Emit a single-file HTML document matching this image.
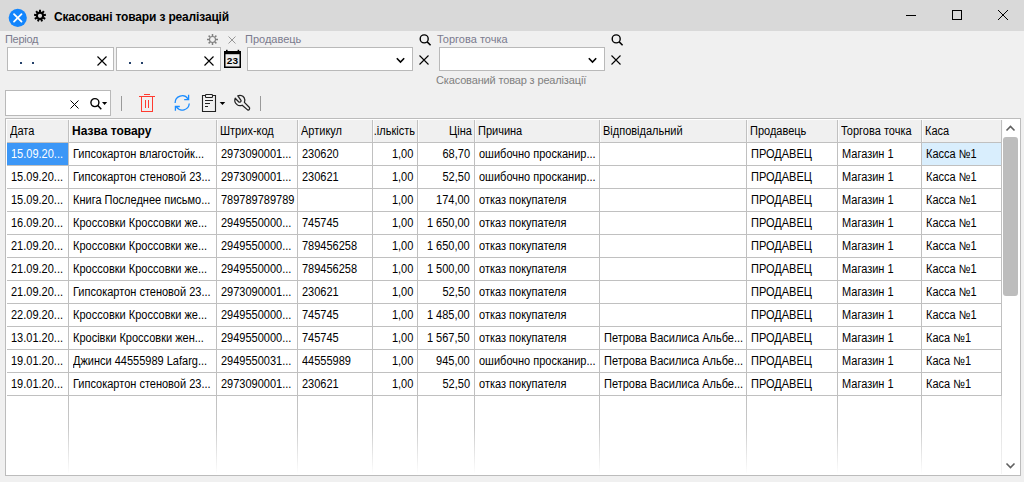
<!DOCTYPE html>
<html><head><meta charset="utf-8"><title>Скасовані товари з реалізації</title>
<style>
*{margin:0;padding:0;box-sizing:border-box}
html,body{width:1024px;height:482px;overflow:hidden;background:#f0f0f0;font-family:"Liberation Sans",sans-serif;font-size:11px;color:#000}
.a{position:absolute}
svg{display:block}
#title{left:0;top:0;width:1024px;height:31px;background:#d9d9d9}
.ttl{left:54px;top:9px;font-weight:bold;font-size:12px;line-height:16px;color:#000;white-space:nowrap;letter-spacing:-0.16px}
.lbl{color:#7b7b8e;font-size:11px;line-height:13px;white-space:nowrap}
.inp{background:#fff;border:1px solid #b9b9b9}
.grid{left:5px;top:118px;width:1016px;height:358px;border:1px solid #bcbcbc;background:#fff}
.hd{top:120px;height:22px;background:#f0f0f0}
.ht{top:120px;height:22px;line-height:22px;white-space:nowrap;overflow:hidden;font-size:12px}
.hl{background:#c0c0c0}
.ct{height:22px;line-height:22px;white-space:nowrap;overflow:hidden;font-size:12px}
.s{display:inline-block;transform:scaleX(0.9167);transform-origin:0 50%}
.r{display:flex;justify-content:flex-end}
.r .s{transform-origin:100% 50%;flex:none}
</style></head><body>

<div class="a" id="title"></div>
<svg class="a" style="left:0px;top:0px" width="32" height="31" viewBox="0 0 32 31"><circle cx="17.75" cy="17.85" r="9.1" fill="#1285fd"/><path d="M14 14.1 L21.5 21.6 M21.5 14.1 L14 21.6" stroke="#fff" stroke-width="1.8" stroke-linecap="round"/></svg>
<svg class="a" style="left:33px;top:9px" width="14" height="14" viewBox="0 0 14 14"><circle cx="7.0" cy="6.8" r="3.15" fill="none" stroke="#000" stroke-width="2.1"/><path d="M7.00 3.20 L7.00 0.80" stroke="#000" stroke-width="2.0"/><path d="M9.31 4.04 L10.86 2.20" stroke="#000" stroke-width="2.0"/><path d="M10.55 6.17 L12.91 5.76" stroke="#000" stroke-width="2.0"/><path d="M10.12 8.60 L12.20 9.80" stroke="#000" stroke-width="2.0"/><path d="M8.23 10.18 L9.05 12.44" stroke="#000" stroke-width="2.0"/><path d="M5.77 10.18 L4.95 12.44" stroke="#000" stroke-width="2.0"/><path d="M3.88 8.60 L1.80 9.80" stroke="#000" stroke-width="2.0"/><path d="M3.45 6.17 L1.09 5.76" stroke="#000" stroke-width="2.0"/><path d="M4.69 4.04 L3.14 2.20" stroke="#000" stroke-width="2.0"/></svg>
<div class="a ttl">Скасовані товари з реалізацій</div>
<svg class="a" style="left:890px;top:0px" width="134" height="31" viewBox="0 0 134 31"><path d="M16 15.5 H26" stroke="#000" stroke-width="1"/><rect x="62.5" y="10.5" width="9" height="9" fill="none" stroke="#000" stroke-width="1"/><path d="M108 10 L118 20 M118 10 L108 20" stroke="#000" stroke-width="1"/></svg>
<div class="a lbl" style="left:5px;top:33px;letter-spacing:-0.3px">Період</div>
<div class="a inp" style="left:7px;top:47px;width:107px;height:24px"></div>
<div class="a inp" style="left:116px;top:47px;width:105px;height:24px"></div>
<div class="a" style="left:20px;top:62px;width:2px;height:2px;background:#24406a"></div>
<div class="a" style="left:32px;top:62px;width:2px;height:2px;background:#24406a"></div>
<div class="a" style="left:129px;top:62px;width:2px;height:2px;background:#24406a"></div>
<div class="a" style="left:141px;top:62px;width:2px;height:2px;background:#24406a"></div>
<svg class="a" style="left:97px;top:56px" width="10" height="10" viewBox="0 0 10 10"><path d="M0.5 0.5 L9.5 9.5 M9.5 0.5 L0.5 9.5" stroke="#000" stroke-width="1.15"/></svg>
<svg class="a" style="left:204px;top:56px" width="10" height="10" viewBox="0 0 10 10"><path d="M0.5 0.5 L9.5 9.5 M9.5 0.5 L0.5 9.5" stroke="#000" stroke-width="1.15"/></svg>
<svg class="a" style="left:223px;top:49px" width="19" height="20" viewBox="0 0 19 20"><rect x="1.75" y="2.75" width="15.5" height="15.5" fill="#eeeeee" stroke="#000" stroke-width="1.5"/><rect x="1" y="2" width="17" height="3.2" fill="#000"/><rect x="3" y="0.8" width="1.6" height="2" fill="#000"/><rect x="14.6" y="0.8" width="1.6" height="2" fill="#000"/><text x="3.8" y="15.2" font-family="Liberation Sans" font-weight="bold" font-size="8.6" textLength="11.2" lengthAdjust="spacingAndGlyphs" fill="#000">23</text></svg>
<svg class="a" style="left:206px;top:33px" width="13" height="13" viewBox="0 0 13 13"><circle cx="6.5" cy="6.5" r="3.0" fill="none" stroke="#808080" stroke-width="1.1"/><path d="M10.00 6.50 L12.00 6.50" stroke="#808080" stroke-width="1.5"/><path d="M8.97 8.97 L10.39 10.39" stroke="#808080" stroke-width="1.5"/><path d="M6.50 10.00 L6.50 12.00" stroke="#808080" stroke-width="1.5"/><path d="M4.03 8.97 L2.61 10.39" stroke="#808080" stroke-width="1.5"/><path d="M3.00 6.50 L1.00 6.50" stroke="#808080" stroke-width="1.5"/><path d="M4.03 4.03 L2.61 2.61" stroke="#808080" stroke-width="1.5"/><path d="M6.50 3.00 L6.50 1.00" stroke="#808080" stroke-width="1.5"/><path d="M8.97 4.03 L10.39 2.61" stroke="#808080" stroke-width="1.5"/></svg>
<svg class="a" style="left:228px;top:36px" width="8" height="8" viewBox="0 0 8 8"><path d="M0.5 0.5 L7.5 7.5 M7.5 0.5 L0.5 7.5" stroke="#8c8c8c" stroke-width="0.9"/></svg>
<div class="a lbl" style="left:245px;top:33px">Продавець</div>
<div class="a inp" style="left:247px;top:47px;width:166px;height:24px"></div>
<svg class="a" style="left:396px;top:57px" width="10" height="7" viewBox="0 0 10 7"><path d="M0.8 1.3 L4.5 5 L8.2 1.3" fill="none" stroke="#000" stroke-width="1.6"/></svg>
<svg class="a" style="left:419px;top:34px" width="13" height="13" viewBox="0 0 13 13"><circle cx="5.2" cy="4.9" r="4.0" fill="none" stroke="#000" stroke-width="1.4"/><path d="M8.2 7.9 L11.6 11.3" stroke="#000" stroke-width="1.5"/></svg>
<svg class="a" style="left:419px;top:55px" width="10" height="10" viewBox="0 0 10 10"><path d="M0.5 0.5 L9.5 9.5 M9.5 0.5 L0.5 9.5" stroke="#000" stroke-width="1.1"/></svg>
<div class="a lbl" style="left:437px;top:33px">Торгова точка</div>
<div class="a inp" style="left:439px;top:47px;width:166px;height:24px"></div>
<svg class="a" style="left:588px;top:57px" width="10" height="7" viewBox="0 0 10 7"><path d="M0.8 1.3 L4.5 5 L8.2 1.3" fill="none" stroke="#000" stroke-width="1.6"/></svg>
<svg class="a" style="left:611px;top:34px" width="13" height="13" viewBox="0 0 13 13"><circle cx="5.2" cy="4.9" r="4.0" fill="none" stroke="#000" stroke-width="1.4"/><path d="M8.2 7.9 L11.6 11.3" stroke="#000" stroke-width="1.5"/></svg>
<svg class="a" style="left:611px;top:55px" width="10" height="10" viewBox="0 0 10 10"><path d="M0.5 0.5 L9.5 9.5 M9.5 0.5 L0.5 9.5" stroke="#000" stroke-width="1.1"/></svg>
<div class="a lbl" style="left:436px;top:74px;color:#808080;letter-spacing:-0.15px">Скасований товар з реалізації</div>
<div class="a inp" style="left:5px;top:90px;width:106px;height:26px"></div>
<svg class="a" style="left:70px;top:100px" width="9" height="9" viewBox="0 0 9 9"><path d="M0.5 0.5 L8.5 8.5 M8.5 0.5 L0.5 8.5" stroke="#000" stroke-width="1.0"/></svg>
<svg class="a" style="left:89px;top:97px" width="20" height="14" viewBox="0 0 20 14"><circle cx="5.9" cy="5.6" r="4.0" fill="none" stroke="#000" stroke-width="1.4"/><path d="M8.8 8.6 L12.3 12.2" stroke="#000" stroke-width="1.5"/><path d="M13 5 H18.2 L15.6 8 Z" fill="#000"/></svg>
<div class="a" style="left:121px;top:96px;width:1px;height:15px;background:#9a9a9a"></div>
<div class="a" style="left:260px;top:96px;width:1px;height:15px;background:#9a9a9a"></div>
<svg class="a" style="left:138px;top:93px" width="18" height="20" viewBox="0 0 18 20"><rect x="6" y="1" width="6" height="1" fill="#ff3b30"/><rect x="1" y="3" width="16" height="1" fill="#ff3b30"/><rect x="3" y="4" width="1" height="15" fill="#ff3b30"/><rect x="14" y="4" width="1" height="15" fill="#ff3b30"/><rect x="3" y="18" width="12" height="1" fill="#ff3b30"/><rect x="7" y="7" width="1" height="8" fill="#ff3b30"/><rect x="10" y="7" width="1" height="8" fill="#ff3b30"/></svg>
<svg class="a" style="left:172px;top:93px" width="20" height="19" viewBox="0 0 20 19"><path d="M3.10 9.90 A7.1 7.1 0 0 1 16.02 5.83" fill="none" stroke="#1a8cff" stroke-width="1.3"/><path d="M17.27 10.52 A7.1 7.1 0 0 1 4.38 13.97" fill="none" stroke="#1a8cff" stroke-width="1.3"/><path d="M16.6 1.8 V6.6 H12.2" fill="none" stroke="#1a8cff" stroke-width="1.3"/><path d="M3.4 17.8 V13.5 H7.8" fill="none" stroke="#1a8cff" stroke-width="1.3"/></svg>
<svg class="a" style="left:201px;top:93px" width="26" height="20" viewBox="0 0 26 20"><path d="M4.5 2.5 H1.5 V18.5 H14.5 V2.5 H11.5" fill="none" stroke="#222" stroke-width="1.1"/><rect x="4.5" y="1.5" width="7" height="3" rx="0.8" fill="#f0f0f0" stroke="#222" stroke-width="1.1"/><path d="M4 7.5 H12 M4 10.5 H9 M4 13.5 H7" stroke="#222" stroke-width="1"/><path d="M18.7 9 H24.2 L21.45 12 Z" fill="#000"/></svg>
<svg class="a" style="left:231px;top:92px" width="22" height="22" viewBox="0 0 22 22"><path d="M6.8 3.8 C8.8 3.0 11.8 3.4 13.1 5.6 C14.0 7.2 13.9 9.4 13.4 10.4 L18.2 15.2 C19.3 16.3 18.2 18.6 16.6 17.9 L11.2 13.2 C9.8 13.8 7.4 13.8 6.0 12.6 C4.0 11.0 3.4 8.4 4.2 6.2 L7.6 9.8 C8.6 10.8 10.6 9.6 10.0 8.3 Z" fill="none" stroke="#222" stroke-width="1.25" stroke-linejoin="round"/></svg>
<div class="a grid"></div>
<div class="a" style="left:6px;top:119px;width:1014px;height:1px;background:#fff"></div>
<div class="a hd" style="left:7px;width:994px"></div>
<div class="a hl" style="left:7px;top:142px;width:994px;height:1px"></div>
<div class="a hl" style="left:68px;top:120px;width:1px;height:22px"></div>
<div class="a" style="left:69px;top:120px;width:1px;height:22px;background:#fafafa"></div>
<div class="a ht" style="left:7px;width:61px;padding-left:3px;"><span class="s">Дата</span></div>
<div class="a hl" style="left:216px;top:120px;width:1px;height:22px"></div>
<div class="a" style="left:217px;top:120px;width:1px;height:22px;background:#fafafa"></div>
<div class="a ht" style="left:69px;width:147px;padding-left:3px;font-weight:bold;font-size:12px;">Назва товару</div>
<div class="a hl" style="left:297px;top:120px;width:1px;height:22px"></div>
<div class="a" style="left:298px;top:120px;width:1px;height:22px;background:#fafafa"></div>
<div class="a ht" style="left:217px;width:80px;padding-left:3px;"><span class="s">Штрих-код</span></div>
<div class="a hl" style="left:372px;top:120px;width:1px;height:22px"></div>
<div class="a" style="left:373px;top:120px;width:1px;height:22px;background:#fafafa"></div>
<div class="a ht" style="left:298px;width:74px;padding-left:3px;"><span class="s">Артикул</span></div>
<div class="a hl" style="left:417px;top:120px;width:1px;height:22px"></div>
<div class="a" style="left:418px;top:120px;width:1px;height:22px;background:#fafafa"></div>
<div class="a ht r" style="left:373px;width:44px;text-align:right;padding-right:2px;"><span class="s">.ількість</span></div>
<div class="a hl" style="left:474px;top:120px;width:1px;height:22px"></div>
<div class="a" style="left:475px;top:120px;width:1px;height:22px;background:#fafafa"></div>
<div class="a ht r" style="left:418px;width:56px;text-align:right;padding-right:2px;"><span class="s">Ціна</span></div>
<div class="a hl" style="left:599px;top:120px;width:1px;height:22px"></div>
<div class="a" style="left:600px;top:120px;width:1px;height:22px;background:#fafafa"></div>
<div class="a ht" style="left:475px;width:124px;padding-left:3px;"><span class="s">Причина</span></div>
<div class="a hl" style="left:746px;top:120px;width:1px;height:22px"></div>
<div class="a" style="left:747px;top:120px;width:1px;height:22px;background:#fafafa"></div>
<div class="a ht" style="left:600px;width:146px;padding-left:3px;"><span class="s">Відповідальний</span></div>
<div class="a hl" style="left:837px;top:120px;width:1px;height:22px"></div>
<div class="a" style="left:838px;top:120px;width:1px;height:22px;background:#fafafa"></div>
<div class="a ht" style="left:747px;width:90px;padding-left:3px;"><span class="s">Продавець</span></div>
<div class="a hl" style="left:921px;top:120px;width:1px;height:22px"></div>
<div class="a" style="left:922px;top:120px;width:1px;height:22px;background:#fafafa"></div>
<div class="a ht" style="left:838px;width:83px;padding-left:3px;"><span class="s">Торгова точка</span></div>
<div class="a hl" style="left:1001px;top:120px;width:1px;height:22px"></div>
<div class="a" style="left:1002px;top:120px;width:1px;height:22px;background:#fafafa"></div>
<div class="a ht" style="left:922px;width:79px;padding-left:3px;"><span class="s">Каса</span></div>
<div class="a hl" style="left:7px;top:165px;width:994px;height:1px"></div>
<div class="a" style="left:7px;top:143px;width:61px;height:22px;background:#3c97f7;"></div>
<div class="a ct" style="left:7px;top:143px;width:61px;color:#fff;padding-left:4px;"><span class="s">15.09.20...</span></div>
<div class="a ct" style="left:69px;top:143px;width:147px;padding-left:4px;"><span class="s">Гипсокартон влагостойк...</span></div>
<div class="a ct" style="left:217px;top:143px;width:80px;padding-left:4px;"><span class="s">2973090001...</span></div>
<div class="a ct" style="left:298px;top:143px;width:74px;padding-left:4px;"><span class="s">230620</span></div>
<div class="a ct r" style="left:373px;top:143px;width:44px;text-align:right;padding-right:4px;"><span class="s">1,00</span></div>
<div class="a ct r" style="left:418px;top:143px;width:56px;text-align:right;padding-right:4px;"><span class="s">68,70</span></div>
<div class="a ct" style="left:475px;top:143px;width:124px;padding-left:4px;"><span class="s">ошибочно просканир...</span></div>
<div class="a ct" style="left:600px;top:143px;width:146px;padding-left:4px;"><span class="s"></span></div>
<div class="a ct" style="left:747px;top:143px;width:90px;padding-left:4px;"><span class="s">ПРОДАВЕЦ</span></div>
<div class="a ct" style="left:838px;top:143px;width:83px;padding-left:4px;"><span class="s">Магазин 1</span></div>
<div class="a" style="left:922px;top:143px;width:79px;height:22px;background:#d9eefd;"></div>
<div class="a ct" style="left:922px;top:143px;width:79px;padding-left:4px;"><span class="s">Касса №1</span></div>
<div class="a hl" style="left:7px;top:188px;width:994px;height:1px"></div>
<div class="a ct" style="left:7px;top:166px;width:61px;padding-left:4px;"><span class="s">15.09.20...</span></div>
<div class="a ct" style="left:69px;top:166px;width:147px;padding-left:4px;"><span class="s">Гипсокартон стеновой 23...</span></div>
<div class="a ct" style="left:217px;top:166px;width:80px;padding-left:4px;"><span class="s">2973090001...</span></div>
<div class="a ct" style="left:298px;top:166px;width:74px;padding-left:4px;"><span class="s">230621</span></div>
<div class="a ct r" style="left:373px;top:166px;width:44px;text-align:right;padding-right:4px;"><span class="s">1,00</span></div>
<div class="a ct r" style="left:418px;top:166px;width:56px;text-align:right;padding-right:4px;"><span class="s">52,50</span></div>
<div class="a ct" style="left:475px;top:166px;width:124px;padding-left:4px;"><span class="s">ошибочно просканир...</span></div>
<div class="a ct" style="left:600px;top:166px;width:146px;padding-left:4px;"><span class="s"></span></div>
<div class="a ct" style="left:747px;top:166px;width:90px;padding-left:4px;"><span class="s">ПРОДАВЕЦ</span></div>
<div class="a ct" style="left:838px;top:166px;width:83px;padding-left:4px;"><span class="s">Магазин 1</span></div>
<div class="a ct" style="left:922px;top:166px;width:79px;padding-left:4px;"><span class="s">Касса №1</span></div>
<div class="a hl" style="left:7px;top:211px;width:994px;height:1px"></div>
<div class="a ct" style="left:7px;top:189px;width:61px;padding-left:4px;"><span class="s">15.09.20...</span></div>
<div class="a ct" style="left:69px;top:189px;width:147px;padding-left:4px;"><span class="s">Книга Последнее письмо...</span></div>
<div class="a ct" style="left:217px;top:189px;width:80px;padding-left:4px;"><span class="s">789789789789</span></div>
<div class="a ct" style="left:298px;top:189px;width:74px;padding-left:4px;"><span class="s"></span></div>
<div class="a ct r" style="left:373px;top:189px;width:44px;text-align:right;padding-right:4px;"><span class="s">1,00</span></div>
<div class="a ct r" style="left:418px;top:189px;width:56px;text-align:right;padding-right:4px;"><span class="s">174,00</span></div>
<div class="a ct" style="left:475px;top:189px;width:124px;padding-left:4px;"><span class="s">отказ покупателя</span></div>
<div class="a ct" style="left:600px;top:189px;width:146px;padding-left:4px;"><span class="s"></span></div>
<div class="a ct" style="left:747px;top:189px;width:90px;padding-left:4px;"><span class="s">ПРОДАВЕЦ</span></div>
<div class="a ct" style="left:838px;top:189px;width:83px;padding-left:4px;"><span class="s">Магазин 1</span></div>
<div class="a ct" style="left:922px;top:189px;width:79px;padding-left:4px;"><span class="s">Касса №1</span></div>
<div class="a hl" style="left:7px;top:234px;width:994px;height:1px"></div>
<div class="a ct" style="left:7px;top:212px;width:61px;padding-left:4px;"><span class="s">16.09.20...</span></div>
<div class="a ct" style="left:69px;top:212px;width:147px;padding-left:4px;"><span class="s">Кроссовки Кроссовки же...</span></div>
<div class="a ct" style="left:217px;top:212px;width:80px;padding-left:4px;"><span class="s">2949550000...</span></div>
<div class="a ct" style="left:298px;top:212px;width:74px;padding-left:4px;"><span class="s">745745</span></div>
<div class="a ct r" style="left:373px;top:212px;width:44px;text-align:right;padding-right:4px;"><span class="s">1,00</span></div>
<div class="a ct r" style="left:418px;top:212px;width:56px;text-align:right;padding-right:4px;"><span class="s">1 650,00</span></div>
<div class="a ct" style="left:475px;top:212px;width:124px;padding-left:4px;"><span class="s">отказ покупателя</span></div>
<div class="a ct" style="left:600px;top:212px;width:146px;padding-left:4px;"><span class="s"></span></div>
<div class="a ct" style="left:747px;top:212px;width:90px;padding-left:4px;"><span class="s">ПРОДАВЕЦ</span></div>
<div class="a ct" style="left:838px;top:212px;width:83px;padding-left:4px;"><span class="s">Магазин 1</span></div>
<div class="a ct" style="left:922px;top:212px;width:79px;padding-left:4px;"><span class="s">Касса №1</span></div>
<div class="a hl" style="left:7px;top:257px;width:994px;height:1px"></div>
<div class="a ct" style="left:7px;top:235px;width:61px;padding-left:4px;"><span class="s">21.09.20...</span></div>
<div class="a ct" style="left:69px;top:235px;width:147px;padding-left:4px;"><span class="s">Кроссовки Кроссовки же...</span></div>
<div class="a ct" style="left:217px;top:235px;width:80px;padding-left:4px;"><span class="s">2949550000...</span></div>
<div class="a ct" style="left:298px;top:235px;width:74px;padding-left:4px;"><span class="s">789456258</span></div>
<div class="a ct r" style="left:373px;top:235px;width:44px;text-align:right;padding-right:4px;"><span class="s">1,00</span></div>
<div class="a ct r" style="left:418px;top:235px;width:56px;text-align:right;padding-right:4px;"><span class="s">1 650,00</span></div>
<div class="a ct" style="left:475px;top:235px;width:124px;padding-left:4px;"><span class="s">отказ покупателя</span></div>
<div class="a ct" style="left:600px;top:235px;width:146px;padding-left:4px;"><span class="s"></span></div>
<div class="a ct" style="left:747px;top:235px;width:90px;padding-left:4px;"><span class="s">ПРОДАВЕЦ</span></div>
<div class="a ct" style="left:838px;top:235px;width:83px;padding-left:4px;"><span class="s">Магазин 1</span></div>
<div class="a ct" style="left:922px;top:235px;width:79px;padding-left:4px;"><span class="s">Касса №1</span></div>
<div class="a hl" style="left:7px;top:280px;width:994px;height:1px"></div>
<div class="a ct" style="left:7px;top:258px;width:61px;padding-left:4px;"><span class="s">21.09.20...</span></div>
<div class="a ct" style="left:69px;top:258px;width:147px;padding-left:4px;"><span class="s">Кроссовки Кроссовки же...</span></div>
<div class="a ct" style="left:217px;top:258px;width:80px;padding-left:4px;"><span class="s">2949550000...</span></div>
<div class="a ct" style="left:298px;top:258px;width:74px;padding-left:4px;"><span class="s">789456258</span></div>
<div class="a ct r" style="left:373px;top:258px;width:44px;text-align:right;padding-right:4px;"><span class="s">1,00</span></div>
<div class="a ct r" style="left:418px;top:258px;width:56px;text-align:right;padding-right:4px;"><span class="s">1 500,00</span></div>
<div class="a ct" style="left:475px;top:258px;width:124px;padding-left:4px;"><span class="s">отказ покупателя</span></div>
<div class="a ct" style="left:600px;top:258px;width:146px;padding-left:4px;"><span class="s"></span></div>
<div class="a ct" style="left:747px;top:258px;width:90px;padding-left:4px;"><span class="s">ПРОДАВЕЦ</span></div>
<div class="a ct" style="left:838px;top:258px;width:83px;padding-left:4px;"><span class="s">Магазин 1</span></div>
<div class="a ct" style="left:922px;top:258px;width:79px;padding-left:4px;"><span class="s">Касса №1</span></div>
<div class="a hl" style="left:7px;top:303px;width:994px;height:1px"></div>
<div class="a ct" style="left:7px;top:281px;width:61px;padding-left:4px;"><span class="s">21.09.20...</span></div>
<div class="a ct" style="left:69px;top:281px;width:147px;padding-left:4px;"><span class="s">Гипсокартон стеновой 23...</span></div>
<div class="a ct" style="left:217px;top:281px;width:80px;padding-left:4px;"><span class="s">2973090001...</span></div>
<div class="a ct" style="left:298px;top:281px;width:74px;padding-left:4px;"><span class="s">230621</span></div>
<div class="a ct r" style="left:373px;top:281px;width:44px;text-align:right;padding-right:4px;"><span class="s">1,00</span></div>
<div class="a ct r" style="left:418px;top:281px;width:56px;text-align:right;padding-right:4px;"><span class="s">52,50</span></div>
<div class="a ct" style="left:475px;top:281px;width:124px;padding-left:4px;"><span class="s">отказ покупателя</span></div>
<div class="a ct" style="left:600px;top:281px;width:146px;padding-left:4px;"><span class="s"></span></div>
<div class="a ct" style="left:747px;top:281px;width:90px;padding-left:4px;"><span class="s">ПРОДАВЕЦ</span></div>
<div class="a ct" style="left:838px;top:281px;width:83px;padding-left:4px;"><span class="s">Магазин 1</span></div>
<div class="a ct" style="left:922px;top:281px;width:79px;padding-left:4px;"><span class="s">Касса №1</span></div>
<div class="a hl" style="left:7px;top:326px;width:994px;height:1px"></div>
<div class="a ct" style="left:7px;top:304px;width:61px;padding-left:4px;"><span class="s">22.09.20...</span></div>
<div class="a ct" style="left:69px;top:304px;width:147px;padding-left:4px;"><span class="s">Кроссовки Кроссовки же...</span></div>
<div class="a ct" style="left:217px;top:304px;width:80px;padding-left:4px;"><span class="s">2949550000...</span></div>
<div class="a ct" style="left:298px;top:304px;width:74px;padding-left:4px;"><span class="s">745745</span></div>
<div class="a ct r" style="left:373px;top:304px;width:44px;text-align:right;padding-right:4px;"><span class="s">1,00</span></div>
<div class="a ct r" style="left:418px;top:304px;width:56px;text-align:right;padding-right:4px;"><span class="s">1 485,00</span></div>
<div class="a ct" style="left:475px;top:304px;width:124px;padding-left:4px;"><span class="s">отказ покупателя</span></div>
<div class="a ct" style="left:600px;top:304px;width:146px;padding-left:4px;"><span class="s"></span></div>
<div class="a ct" style="left:747px;top:304px;width:90px;padding-left:4px;"><span class="s">ПРОДАВЕЦ</span></div>
<div class="a ct" style="left:838px;top:304px;width:83px;padding-left:4px;"><span class="s">Магазин 1</span></div>
<div class="a ct" style="left:922px;top:304px;width:79px;padding-left:4px;"><span class="s">Касса №1</span></div>
<div class="a hl" style="left:7px;top:349px;width:994px;height:1px"></div>
<div class="a ct" style="left:7px;top:327px;width:61px;padding-left:4px;"><span class="s">13.01.20...</span></div>
<div class="a ct" style="left:69px;top:327px;width:147px;padding-left:4px;"><span class="s">Кросівки Кроссовки жен...</span></div>
<div class="a ct" style="left:217px;top:327px;width:80px;padding-left:4px;"><span class="s">2949550000...</span></div>
<div class="a ct" style="left:298px;top:327px;width:74px;padding-left:4px;"><span class="s">745745</span></div>
<div class="a ct r" style="left:373px;top:327px;width:44px;text-align:right;padding-right:4px;"><span class="s">1,00</span></div>
<div class="a ct r" style="left:418px;top:327px;width:56px;text-align:right;padding-right:4px;"><span class="s">1 567,50</span></div>
<div class="a ct" style="left:475px;top:327px;width:124px;padding-left:4px;"><span class="s">отказ покупателя</span></div>
<div class="a ct" style="left:600px;top:327px;width:146px;padding-left:4px;"><span class="s">Петрова Василиса Альбе...</span></div>
<div class="a ct" style="left:747px;top:327px;width:90px;padding-left:4px;"><span class="s">ПРОДАВЕЦ</span></div>
<div class="a ct" style="left:838px;top:327px;width:83px;padding-left:4px;"><span class="s">Магазин 1</span></div>
<div class="a ct" style="left:922px;top:327px;width:79px;padding-left:4px;"><span class="s">Каса №1</span></div>
<div class="a hl" style="left:7px;top:372px;width:994px;height:1px"></div>
<div class="a ct" style="left:7px;top:350px;width:61px;padding-left:4px;"><span class="s">19.01.20...</span></div>
<div class="a ct" style="left:69px;top:350px;width:147px;padding-left:4px;"><span class="s">Джинси 44555989 Lafarg...</span></div>
<div class="a ct" style="left:217px;top:350px;width:80px;padding-left:4px;"><span class="s">2949550031...</span></div>
<div class="a ct" style="left:298px;top:350px;width:74px;padding-left:4px;"><span class="s">44555989</span></div>
<div class="a ct r" style="left:373px;top:350px;width:44px;text-align:right;padding-right:4px;"><span class="s">1,00</span></div>
<div class="a ct r" style="left:418px;top:350px;width:56px;text-align:right;padding-right:4px;"><span class="s">945,00</span></div>
<div class="a ct" style="left:475px;top:350px;width:124px;padding-left:4px;"><span class="s">ошибочно просканир...</span></div>
<div class="a ct" style="left:600px;top:350px;width:146px;padding-left:4px;"><span class="s">Петрова Василиса Альбе...</span></div>
<div class="a ct" style="left:747px;top:350px;width:90px;padding-left:4px;"><span class="s">ПРОДАВЕЦ</span></div>
<div class="a ct" style="left:838px;top:350px;width:83px;padding-left:4px;"><span class="s">Магазин 1</span></div>
<div class="a ct" style="left:922px;top:350px;width:79px;padding-left:4px;"><span class="s">Каса №1</span></div>
<div class="a hl" style="left:7px;top:395px;width:994px;height:1px"></div>
<div class="a ct" style="left:7px;top:373px;width:61px;padding-left:4px;"><span class="s">19.01.20...</span></div>
<div class="a ct" style="left:69px;top:373px;width:147px;padding-left:4px;"><span class="s">Гипсокартон стеновой 23...</span></div>
<div class="a ct" style="left:217px;top:373px;width:80px;padding-left:4px;"><span class="s">2973090001...</span></div>
<div class="a ct" style="left:298px;top:373px;width:74px;padding-left:4px;"><span class="s">230621</span></div>
<div class="a ct r" style="left:373px;top:373px;width:44px;text-align:right;padding-right:4px;"><span class="s">1,00</span></div>
<div class="a ct r" style="left:418px;top:373px;width:56px;text-align:right;padding-right:4px;"><span class="s">52,50</span></div>
<div class="a ct" style="left:475px;top:373px;width:124px;padding-left:4px;"><span class="s">отказ покупателя</span></div>
<div class="a ct" style="left:600px;top:373px;width:146px;padding-left:4px;"><span class="s">Петрова Василиса Альбе...</span></div>
<div class="a ct" style="left:747px;top:373px;width:90px;padding-left:4px;"><span class="s">ПРОДАВЕЦ</span></div>
<div class="a ct" style="left:838px;top:373px;width:83px;padding-left:4px;"><span class="s">Магазин 1</span></div>
<div class="a ct" style="left:922px;top:373px;width:79px;padding-left:4px;"><span class="s">Каса №1</span></div>
<div class="a hl" style="left:68px;top:142px;width:1px;height:254px"></div>
<div class="a" style="left:68px;top:396px;width:1px;height:78px;background:linear-gradient(#c0c0c0,#c8c8c8 40%,#ffffff)"></div>
<div class="a hl" style="left:216px;top:142px;width:1px;height:254px"></div>
<div class="a" style="left:216px;top:396px;width:1px;height:78px;background:linear-gradient(#c0c0c0,#c8c8c8 40%,#ffffff)"></div>
<div class="a hl" style="left:297px;top:142px;width:1px;height:254px"></div>
<div class="a" style="left:297px;top:396px;width:1px;height:78px;background:linear-gradient(#c0c0c0,#c8c8c8 40%,#ffffff)"></div>
<div class="a hl" style="left:372px;top:142px;width:1px;height:254px"></div>
<div class="a" style="left:372px;top:396px;width:1px;height:78px;background:linear-gradient(#c0c0c0,#c8c8c8 40%,#ffffff)"></div>
<div class="a hl" style="left:417px;top:142px;width:1px;height:254px"></div>
<div class="a" style="left:417px;top:396px;width:1px;height:78px;background:linear-gradient(#c0c0c0,#c8c8c8 40%,#ffffff)"></div>
<div class="a hl" style="left:474px;top:142px;width:1px;height:254px"></div>
<div class="a" style="left:474px;top:396px;width:1px;height:78px;background:linear-gradient(#c0c0c0,#c8c8c8 40%,#ffffff)"></div>
<div class="a hl" style="left:599px;top:142px;width:1px;height:254px"></div>
<div class="a" style="left:599px;top:396px;width:1px;height:78px;background:linear-gradient(#c0c0c0,#c8c8c8 40%,#ffffff)"></div>
<div class="a hl" style="left:746px;top:142px;width:1px;height:254px"></div>
<div class="a" style="left:746px;top:396px;width:1px;height:78px;background:linear-gradient(#c0c0c0,#c8c8c8 40%,#ffffff)"></div>
<div class="a hl" style="left:837px;top:142px;width:1px;height:254px"></div>
<div class="a" style="left:837px;top:396px;width:1px;height:78px;background:linear-gradient(#c0c0c0,#c8c8c8 40%,#ffffff)"></div>
<div class="a hl" style="left:921px;top:142px;width:1px;height:254px"></div>
<div class="a" style="left:921px;top:396px;width:1px;height:78px;background:linear-gradient(#c0c0c0,#c8c8c8 40%,#ffffff)"></div>
<div class="a hl" style="left:1001px;top:142px;width:1px;height:254px"></div>
<div class="a" style="left:1001px;top:396px;width:1px;height:78px;background:linear-gradient(#d8d8d8,#f4f4f4)"></div>
<svg class="a" style="left:1002px;top:120px" width="18" height="354" viewBox="0 0 18 354"><path d="M4.5 10.5 L8.5 6.5 L12.5 10.5" fill="none" stroke="#606060" stroke-width="1.6"/><rect x="1" y="17" width="15" height="159" rx="3" fill="#bdbdbd"/><path d="M4.5 343.5 L8.5 347.5 L12.5 343.5" fill="none" stroke="#606060" stroke-width="1.6"/></svg>
</body></html>
